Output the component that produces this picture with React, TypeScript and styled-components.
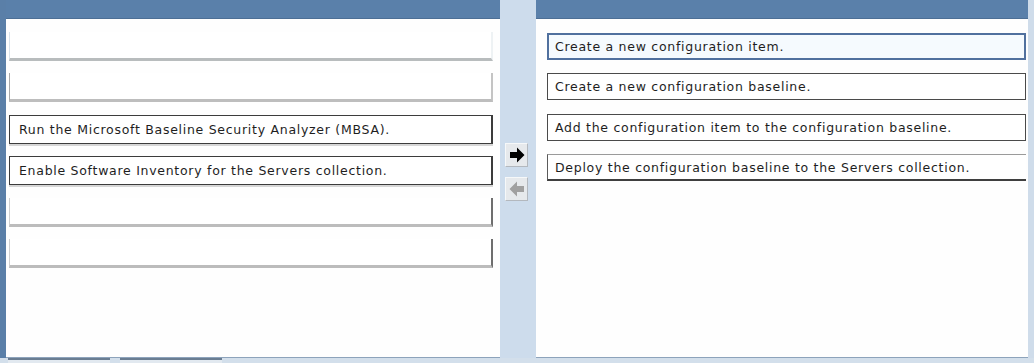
import React from "react";
import styled, { createGlobalStyle } from "styled-components";

const Global = createGlobalStyle`
  html, body { margin: 0; padding: 0; background: #ffffff; }
  body { font-family: "DejaVu Sans", Verdana, sans-serif; }
`;

const Page = styled.div`
  width: 1034px;
  height: 363px;
  display: flex;
  flex-direction: column;
  overflow: hidden;
`;

const Main = styled.div`
  height: 358px;
  display: flex;
  flex-direction: row;
`;

const EdgeStripe = styled.div<{ $tone: "dark" | "light" }>`
  width: 6px;
  flex: none;
  background: ${(p) => (p.$tone === "dark" ? "#5a7fa8" : "#cfdcea")};
`;

const Panel = styled.div<{ $w: number }>`
  width: ${(p) => p.$w}px;
  flex: none;
  display: flex;
  flex-direction: column;
  background: #ffffff;
`;

const PanelHeader = styled.div`
  height: 18px;
  flex: none;
  background: #5a80aa;
  border-bottom: 1px solid #4d6f95;
`;

const PanelBody = styled.div<{ $pt: number; $pl: number; $gap: number }>`
  flex: 1;
  display: flex;
  flex-direction: column;
  padding: ${(p) => p.$pt}px 0 0 ${(p) => p.$pl}px;
  gap: ${(p) => p.$gap}px;
  background: #fefefe;
  border-bottom: 1px solid #8da3bb;
`;

const Middle = styled.div`
  width: 36px;
  flex: none;
  background: #cddcec;
  display: flex;
  flex-direction: column;
  align-items: center;
  padding-top: 143px;
  padding-right: 3px;
  gap: 10px;
  box-sizing: border-box;
`;

const ArrowButton = styled.div`
  width: 23px;
  height: 24px;
  box-sizing: border-box;
  background: #e6e9ec;
  border: 1px solid #f6f8f9;
  border-right-color: #b3b8be;
  border-bottom-color: #b3b8be;
  display: flex;
  align-items: center;
  justify-content: center;
`;

type Kind = "filled" | "emptyA" | "emptyB" | "emptyC";

const LeftItem = styled.div<{ $kind: Kind }>`
  width: 484px;
  height: 29px;
  flex: none;
  box-sizing: border-box;
  display: flex;
  align-items: center;
  padding-left: 9px;
  font-size: 12.5px;
  letter-spacing: 0.72px;
  white-space: nowrap;
  color: #1e1e1e;
  background: #ffffff;
  ${(p) =>
    p.$kind === "filled"
      ? `border: 1px solid #3c3c3c; border-right-width: 2px; box-shadow: 0 2px 0 #d6d6d6;`
      : p.$kind === "emptyA"
      ? `border-left: 1px solid #d8e2ea; border-bottom: 3px solid #b8bcbd; border-right: 2px solid #eef2f4;`
      : p.$kind === "emptyB"
      ? `border-left: 1px solid #a9a9a9; border-bottom: 3px solid #bdbdbd; border-right: 2px solid #c4c4c4;`
      : `border-left: 1px solid #cfcfcf; border-bottom: 3px solid #bcbcbc; border-right: 2px solid #6e6e6e;`}
`;

const RightItem = styled.div<{ $selected?: boolean; $open?: boolean }>`
  width: 479px;
  height: 27px;
  flex: none;
  box-sizing: border-box;
  display: flex;
  align-items: center;
  padding-left: 7px;
  font-size: 12.5px;
  letter-spacing: 0.72px;
  white-space: nowrap;
  color: #1e1e1e;
  background: ${(p) => (p.$selected ? "#f5fafe" : "#ffffff")};
  ${(p) =>
    p.$selected
      ? `border: 2px solid #50709e; padding-left: 6px;`
      : p.$open
      ? `border-top: 1px solid #9a9a9a; border-bottom: 2px solid #3f3f3f; border-left: 1px solid #5a5a5a; border-right: none;`
      : `border: 1px solid #4a4a4a;`}
`;

const Footer = styled.div`
  height: 5px;
  background: #d3dfeb;
  display: flex;
  gap: 10px;
  padding-left: 8px;
`;

const FooterTab = styled.div<{ $w: number }>`
  width: ${(p) => p.$w}px;
  border-top: 2px solid #6a7d92;
  background: #e2e9f0;
`;

const RightArrow = () => (
  <svg width="16" height="16" viewBox="0 0 16 16">
    <polygon points="1,5 8,5 8,0.5 15.5,8 8,15.5 8,11 1,11" fill="#000" />
  </svg>
);

const LeftArrow = () => (
  <svg width="16" height="16" viewBox="0 0 16 16">
    <polygon points="15,5 8,5 8,0.5 0.5,8 8,15.5 8,11 15,11" fill="#a0a0a0" />
  </svg>
);

export default function App() {
  return (
    <Page>
      <Global />
      <Main>
        <EdgeStripe $tone="dark" />
        <Panel $w={494}>
          <PanelHeader />
          <PanelBody $pt={13} $pl={3} $gap={12.4}>
            <LeftItem $kind="emptyA" />
            <LeftItem $kind="emptyB" />
            <LeftItem $kind="filled">Run the Microsoft Baseline Security Analyzer (MBSA).</LeftItem>
            <LeftItem $kind="filled">Enable Software Inventory for the Servers collection.</LeftItem>
            <LeftItem $kind="emptyC" />
            <LeftItem $kind="emptyC" />
          </PanelBody>
        </Panel>
        <Middle>
          <ArrowButton>
            <RightArrow />
          </ArrowButton>
          <ArrowButton>
            <LeftArrow />
          </ArrowButton>
        </Middle>
        <Panel $w={492}>
          <PanelHeader />
          <PanelBody $pt={14} $pl={11} $gap={13.4}>
            <RightItem $selected>Create a new configuration item.</RightItem>
            <RightItem>Create a new configuration baseline.</RightItem>
            <RightItem>Add the configuration item to the configuration baseline.</RightItem>
            <RightItem $open>Deploy the configuration baseline to the Servers collection.</RightItem>
          </PanelBody>
        </Panel>
        <EdgeStripe $tone="light" />
      </Main>
      <Footer>
        <FooterTab $w={102} />
        <FooterTab $w={102} />
      </Footer>
    </Page>
  );
}
